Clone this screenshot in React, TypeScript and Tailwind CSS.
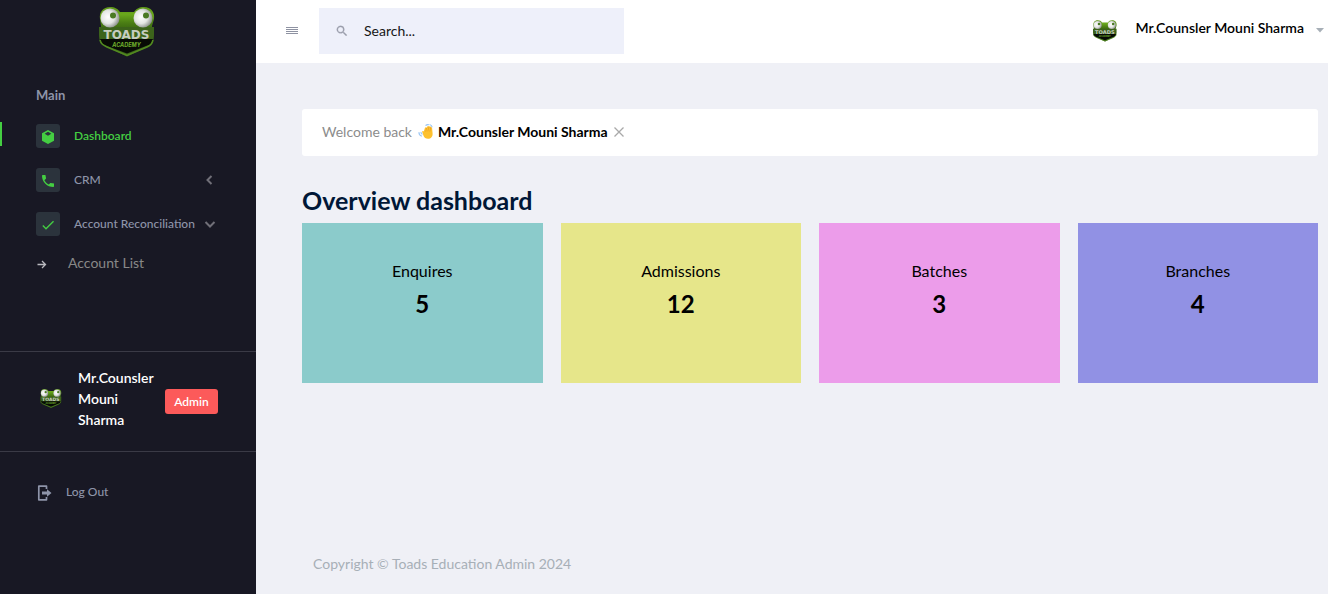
import { ReactNode } from "react";

function ToadLogo({ className }: { className: string }) {
  return (
    <svg viewBox="0 0 56 50" className={className} role="img" aria-label="Toads Academy">
      <defs>
        <linearGradient id="skin" x1="0" y1="0" x2="0" y2="1">
          <stop offset="0" stopColor="#5c9417" />
          <stop offset="0.25" stopColor="#6aa81c" />
          <stop offset="0.55" stopColor="#4a7d14" />
          <stop offset="1" stopColor="#2c520f" />
        </linearGradient>
        <radialGradient id="eye" cx="0.4" cy="0.45" r="0.62">
          <stop offset="0" stopColor="#ffffff" />
          <stop offset="0.55" stopColor="#e4e6e4" />
          <stop offset="1" stopColor="#868b86" />
        </radialGradient>
      </defs>
      <path d="M1 12C0 5 4 0 11 0c5 0 8 2 10 5h14c2-3 5-5 10-5 7 0 11 5 10 12l-2 7v10H2V19Z" fill="url(#skin)" />
      <path d="M0 20h55v8c0 6-2 9-7 12L28 49.500 8 40c-6-3-8-6-8-12Z" fill="#3c631b" />
      <path d="M1 32h53c-1 4-3 6-7 7L28 46.500 8 39c-4-1-6-3-7-7Z" fill="#070b05" />
      <path d="M1 33c1 4 3 5 7 7l20 8.500L48 40c4-2 5-3 6-7" fill="none" stroke="#528a20" strokeWidth="1.600" />
      <circle cx="11" cy="11" r="9.500" fill="url(#eye)" />
      <circle cx="44" cy="11" r="9.500" fill="url(#eye)" />
      <circle cx="14" cy="8.500" r="3" fill="#4a7a24" />
      <circle cx="47" cy="8.500" r="3" fill="#4a7a24" />
      <text x="27.500" y="31.500" textAnchor="middle" fontSize="12" fontWeight="700" fontFamily="DejaVu Sans, sans-serif" fill="#c6cdc0">TOADS</text>
      <text x="27.500" y="40" textAnchor="middle" fontSize="5.500" fontWeight="700" fontStyle="italic" fontFamily="Inter, sans-serif" fill="#6faf2c">ACADEMY</text>
    </svg>
  );
}

function WavingHand() {
  return (
    <svg viewBox="0 0 16 16" className="mr-1 ml-1.5 size-4" role="img" aria-label="Waving hand">
      <path
        d="M4.500 8.800c-.8-1.500.2-2.200 1-1.500l.3.200L7 3.800c.4-1 1.600-.7 1.600.2l.8-1.500c.5-.8 1.700-.4 1.500.5l.4-.5c.7-.7 1.600 0 1.400.8.9-.4 1.500.2 1.400 1l.5 5.200c.2 3.200-1.600 5.300-4.600 5.300-2.400 0-3.700-1-4.500-3z"
        fill="#fdc12f"
      />
      <path d="M8.600 4L7.800 7.300M10.900 3.200L9.900 7M12.700 3.500L12 7.200" fill="none" stroke="#e5951f" strokeWidth="0.600" strokeLinecap="round" />
      <path d="M1 8.500c0 2 .8 3 2.500 3.500M3 8.300c0 .9.3 1.400 1 1.800M8 1.300c1-.8 1.700-.9 2.500-.6M12 .8c1.200.4 1.800 1 2 2" fill="none" stroke="#9cc7f5" strokeWidth="1.200" strokeLinecap="round" />
    </svg>
  );
}

function IconTile({ children }: { children: ReactNode }) {
  return (
    <span className="flex size-6 shrink-0 items-center justify-center rounded-[3px] bg-[#2b333c] text-[#44ce42]">
      <svg viewBox="0 0 24 24" className="mt-0.5 size-4" fill="currentColor" aria-hidden="true">
        {children}
      </svg>
    </span>
  );
}

function Sidebar() {
  return (
    <aside className="flex w-64 shrink-0 flex-col bg-[#181824] text-xs font-medium text-[#8e94a9]">
      <a href="#" className="flex h-[63px] items-start justify-center pt-[7px] pr-0.5">
        <ToadLogo className="h-[50px] w-14" />
      </a>
      <nav className="flex flex-col pt-5">
        <h2 className="px-9 text-[13px] leading-6 font-bold">Main</h2>
        <ul className="flex flex-col pt-[15px]">
          <li className="relative mb-5 px-9 pt-0.5">
            <span className="absolute top-0 left-0 h-6 w-0.5 bg-[#44ce42]" />
            <a href="#" className="flex h-6 items-center gap-[14px] font-semibold text-[#44ce42]">
              <IconTile>
                <path fillRule="evenodd" d="M12 1.500l9 5v11L12 22.500l-9-5v-11zM12 4L7 7l5 3 5-3z" />
              </IconTile>
              Dashboard
            </a>
          </li>
          <li className="mb-5 pr-10 pl-9">
            <a href="#" className="flex h-6 items-center gap-[14px]">
              <IconTile>
                <path d="M6.620 10.790c1.440 2.830 3.760 5.150 6.590 6.590l2.200-2.200c.28-.28.670-.36 1.020-.25 1.120.37 2.320.57 3.570.57a1 1 0 0 1 1 1V20a1 1 0 0 1-1 1A17 17 0 0 1 3 4a1 1 0 0 1 1-1h3.500a1 1 0 0 1 1 1c0 1.250.2 2.450.57 3.570.11.350.03.740-.25 1.020z" />
              </IconTile>
              <span className="grow">CRM</span>
              <svg viewBox="0 0 12 12" className="size-3" fill="none" stroke="#706f78" strokeWidth="2" aria-hidden="true">
                <path d="M7.500 2l-4 4 4 4" />
              </svg>
            </a>
          </li>
          <li className="pr-10 pl-9">
            <a href="#" className="flex h-6 items-center">
              <IconTile>
                <path d="M21 7L9 19l-5.500-5.500 1.410-1.410L9 16.170 19.590 5.590z" />
              </IconTile>
              <span className="ml-[14px] grow whitespace-nowrap">Account Reconciliation</span>
              <svg viewBox="0 0 12 12" className="ml-1 size-3 shrink-0" fill="none" stroke="#706f78" strokeWidth="2" aria-hidden="true">
                <path d="M1.500 4L6 8.500 10.500 4" />
              </svg>
            </a>
            <ul className="pt-[15px]">
              <li>
                <a href="#" className="flex h-6 items-center gap-5 text-sm font-normal text-[#888888]">
                  <svg viewBox="0 0 12 12" className="mt-0.5 size-3" fill="none" stroke="#b9b9bf" strokeWidth="1.300" aria-hidden="true">
                    <path d="M1.500 6.500h8M6 3l3.500 3.500L6 10" />
                  </svg>
                  Account List
                </a>
              </li>
            </ul>
          </li>
        </ul>
      </nav>
      <div className="mt-[76px] flex items-center border-y border-[#3a3a46] pt-[15px] pr-9 pb-[21px] pl-10">
        <ToadLogo className="h-[19px] w-[22px] shrink-0" />
        <p className="ml-4 w-[87px] text-sm leading-[21px] font-semibold text-white">Mr.Counsler Mouni Sharma</p>
        <span className="mt-1.5 flex h-[25px] w-[53px] items-center justify-center rounded-[3px] bg-[#fc5a5a] text-xs font-semibold text-white">Admin</span>
      </div>
      <a href="#" className="mt-7 flex h-6 items-center gap-[14px] px-9">
        <svg viewBox="0 0 16 16" className="mt-0.5 size-4" aria-hidden="true">
          <path d="M10.500 4V1.200H2.800v13.600h7.700V12" fill="none" stroke="#8e94a9" strokeWidth="1.700" strokeLinejoin="round" />
          <path d="M6 6.500h5V4.200L15.500 8 11 11.800V9.500H6z" fill="#8e94a9" />
        </svg>
        Log Out
      </a>
    </aside>
  );
}

function Header() {
  return (
    <header className="flex h-[63px] items-center bg-white pr-1 pb-0.5 pl-[30px]">
      <button type="button" aria-label="Toggle menu" className="mr-[21px] flex size-3 shrink-0 items-center">
        <svg viewBox="0 0 12 12" className="size-3" fill="#8e92a2" aria-hidden="true">
          <path d="M0 2h12v1H0zM0 4h12v1H0zM0 6h12v1H0zM0 8h12v1H0z" />
        </svg>
      </button>
      <label className="flex h-[46px] w-[305px] items-center bg-[#eef0fa] pl-4">
        <svg viewBox="0 0 24 24" className="size-[14px]" fill="#9a9dab" stroke="#9a9dab" strokeWidth="0.500" aria-hidden="true">
          <path d="M9.500 3A6.500 6.500 0 0 1 16 9.500c0 1.610-.59 3.090-1.560 4.230l.27.270h.79l5 5-1.500 1.500-5-5v-.79l-.27-.27A6.500 6.500 0 1 1 9.500 3m0 2a4.500 4.500 0 1 0 0 9 4.500 4.500 0 0 0 0-9" />
        </svg>
        <input type="text" aria-label="Search" placeholder="Search..." className="ml-[15px] min-w-0 grow bg-transparent text-sm text-black outline-none placeholder:text-[#161616]" />
      </label>
      <button type="button" className="ml-auto flex items-center text-sm font-semibold text-black">
        <ToadLogo className="mr-[18px] h-[22px] w-6" />
        <span className="pb-1.5">Mr.Counsler Mouni Sharma</span>
        <svg viewBox="0 0 8 5" className="ml-3 h-[5px] w-2" fill="#a7afb7" aria-hidden="true">
          <path d="M0 0h8L4 4.500z" />
        </svg>
      </button>
    </header>
  );
}

const stats = [
  { label: "Enquires", value: 5, tone: "bg-[#8bcbcb]" },
  { label: "Admissions", value: 12, tone: "bg-[#e6e68a]" },
  { label: "Batches", value: 3, tone: "bg-[#ec9cea]" },
  { label: "Branches", value: 4, tone: "bg-[#9191e4]" },
];

export default function App() {
  return (
    <div className="flex min-h-screen bg-[#eff0f6] font-[Lato,'Open_Sans',sans-serif]">
      <Sidebar />
      <div className="flex min-w-0 grow flex-col">
        <Header />
        <main className="grow pt-[46px] pr-[10px] pl-[46px]">
          <div className="flex h-[47px] items-center rounded-[3px] bg-white px-5 pb-0.5 text-sm text-[#8c8c8c]">
            <span>Welcome back</span>
            <WavingHand />
            <strong className="font-bold text-black">Mr.Counsler Mouni Sharma</strong>
            <button type="button" aria-label="Dismiss" className="ml-1.5">
              <svg viewBox="0 0 10 10" className="size-[10px]" stroke="#a9a9a9" strokeWidth="1.300" aria-hidden="true">
                <path d="M0.500 0.500l9 9M9.500 0.500l-9 9" />
              </svg>
            </button>
          </div>
          <h1 className="mt-7 text-[25px] leading-8 font-bold text-[#001737]">Overview dashboard</h1>
          <div className="mt-[7px] grid grid-cols-4 gap-[18px]">
            {stats.map((s) => (
              <section key={s.label} className={`h-40 pt-9 text-center text-black ${s.tone}`}>
                <h2 className="text-base leading-6">{s.label}</h2>
                <p className="mt-[5px] text-2xl leading-8 font-bold">{s.value}</p>
              </section>
            ))}
          </div>
        </main>
        <footer className="px-[57px] pb-[18px] text-sm leading-6 text-[#a7afb7]">Copyright © Toads Education Admin 2024</footer>
      </div>
    </div>
  );
}
